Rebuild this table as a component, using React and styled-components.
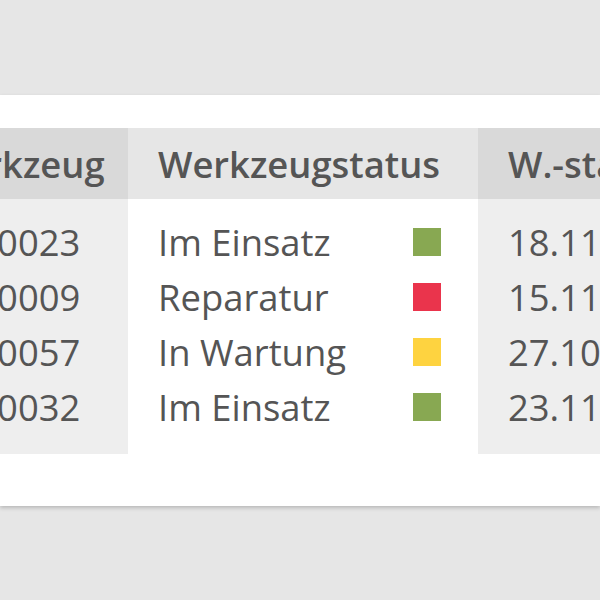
import React from "react";
import styled, { createGlobalStyle } from "styled-components";

const GlobalStyle = createGlobalStyle`
  html, body {
    margin: 0;
    padding: 0;
    background: #e6e6e6;
    font-family: "Open Sans", "Noto Sans", sans-serif;
  }
`;

const Page = styled.div`
  width: 600px;
  height: 600px;
  padding-top: 95px;
  box-sizing: border-box;
  overflow: hidden;
`;

const Card = styled.div`
  height: 411px;
  background: #ffffff;
  box-shadow: 0 2px 4px rgba(0, 0, 0, 0.2);
  padding-top: 33px;
  box-sizing: border-box;
  overflow: hidden;
`;

const Table = styled.div`
  display: flex;
  margin-left: -99px;
`;

const Column = styled.div`
  width: ${props => props.width}px;
  flex: none;
  display: flex;
  flex-direction: column;
`;

const Head = styled.div`
  height: 71px;
  display: flex;
  align-items: center;
  padding: 0 30px;
  background: ${props => (props.dark ? "#d9d9d9" : "#e6e6e6")};
  color: #555555;
  font-size: 36.4px;
  font-weight: 600;
  white-space: nowrap;
`;

const Body = styled.div`
  padding: 15px 37px 20px 30px;
  background: ${props => (props.dark ? "#eeeeee" : "#ffffff")};
`;

const Row = styled.div`
  height: 55px;
  display: flex;
  align-items: center;
  justify-content: space-between;
  color: #555555;
  font-size: 36.4px;
  white-space: nowrap;
`;

const Swatch = styled.span`
  width: 28px;
  height: 28px;
  background: ${props => props.color};
`;

const rows = [
  { id: "W-00023", status: "Im Einsatz", color: "#88a852", date: "18.11.2019" },
  { id: "W-00009", status: "Reparatur", color: "#ea344c", date: "15.11.2019" },
  { id: "W-00057", status: "In Wartung", color: "#fed340", date: "27.10.2019" },
  { id: "W-00032", status: "Im Einsatz", color: "#88a852", date: "23.11.2019" },
];

export default function App() {
  return (
    <Page>
      <GlobalStyle />
      <Card>
        <Table>
          <Column width={227}>
            <Head dark>Werkzeug</Head>
            <Body dark>
              {rows.map(r => (
                <Row key={r.id}>{r.id}</Row>
              ))}
            </Body>
          </Column>
          <Column width={350}>
            <Head>Werkzeugstatus</Head>
            <Body>
              {rows.map(r => (
                <Row key={r.id}>
                  {r.status}
                  <Swatch color={r.color} />
                </Row>
              ))}
            </Body>
          </Column>
          <Column width={300}>
            <Head dark>W.-stand</Head>
            <Body dark>
              {rows.map(r => (
                <Row key={r.id}>{r.date}</Row>
              ))}
            </Body>
          </Column>
        </Table>
      </Card>
    </Page>
  );
}
